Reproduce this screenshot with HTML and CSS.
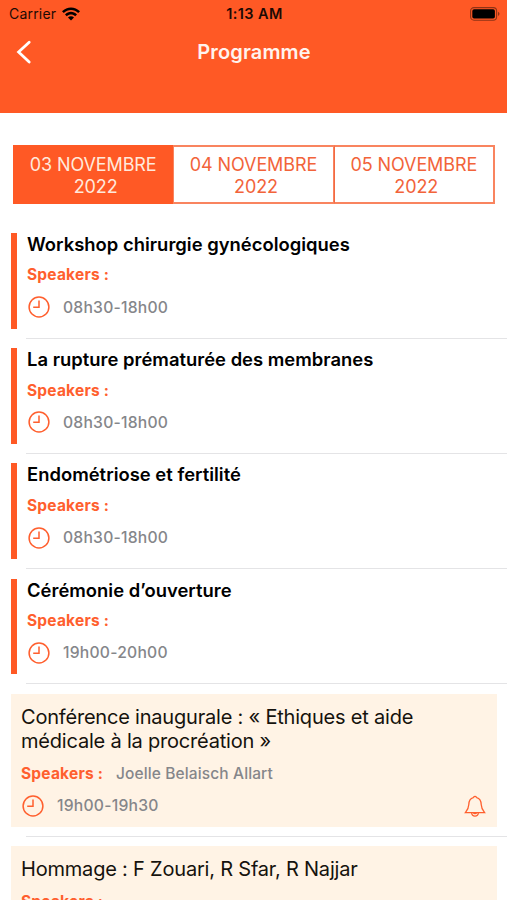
FILE: index.html
```html
<!DOCTYPE html>
<html lang="fr">
<head>
    <meta charset="UTF-8">
    <meta name="viewport" content="width=device-width, initial-scale=1.0">
    <title>Programme</title>
    <link rel="stylesheet" href="styles.css">
</head>
<body>
    <!-- Shared icons -->
    <svg class="icon-defs" width="0" height="0">
        <symbol id="clock" viewBox="0 0 22 22">
            <circle cx="11" cy="11" r="9.9"/>
            <path d="M11 4.5V11.3H5.2"/>
        </symbol>
        <symbol id="bell" viewBox="0 0 22 22">
            <path d="M11 1.3C9.9 1.3 9.7 2.3 9.3 2.6C5.9 3.6 4.9 6.2 4.8 9.4C4.7 13.2 3.7 14.8 1.4 17.6H20.6C18.3 14.8 17.3 13.2 17.2 9.4C17.1 6.2 16.1 3.6 12.7 2.6C12.3 2.3 12.1 1.3 11 1.3Z"/>
            <path d="M7.6 17.8C7.8 20 9.2 21.1 11 21.1S14.2 20 14.4 17.8M9.6 17.8C9.8 19 12.2 19 12.4 17.8"/>
        </symbol>
    </svg>

    <header>
        <div class="status-bar">
            <div class="carrier">
                <span>Carrier</span>
                <svg class="wifi" viewBox="0 0 18 14">
                    <path d="M0 4.3C5 -0.9 13 -0.9 18 4.3L16.2 6.1C12.2 2 5.8 2 1.8 6.1Z"/>
                    <path d="M3 7.4C6.4 4 11.6 4 15 7.4L13.2 9.2C10.8 6.8 7.2 6.8 4.8 9.2Z"/>
                    <path d="M6 10.4C7.7 8.8 10.3 8.8 12 10.4L9 13.5Z"/>
                </svg>
            </div>
            <span class="clock-time">1:13 AM</span>
            <svg class="battery" viewBox="0 0 30 14">
                <rect class="battery-case" x="0.6" y="0.6" width="26" height="12.6" rx="3.4"/>
                <rect x="2.3" y="2.3" width="22.6" height="9.2" rx="1.8"/>
                <path class="battery-tip" d="M28 4.8C30 5.6 30 8.2 28 9Z"/>
            </svg>
        </div>
        <div class="nav-bar">
            <svg class="back" viewBox="0 0 16 24">
                <path d="M13.2 2.2L2.6 12L13.2 22"/>
            </svg>
            <h1>Programme</h1>
        </div>
    </header>

    <nav class="days">
        <a class="day active">03 NOVEMBRE<br>&nbsp;2022</a>
        <a class="day">04 NOVEMBRE<br>&nbsp;2022</a>
        <a class="day">05 NOVEMBRE<br>&nbsp;2022</a>
    </nav>

    <!-- Programme list -->
    <main>
        <section class="row">
            <div class="session">
                <h2>Workshop chirurgie gynécologiques</h2>
                <p class="speakers"><b>Speakers :</b></p>
                <p class="time"><svg class="icon"><use href="#clock"/></svg>08h30-18h00</p>
            </div>
        </section>
        <section class="row">
            <div class="session">
                <h2>La rupture prématurée des membranes</h2>
                <p class="speakers"><b>Speakers :</b></p>
                <p class="time"><svg class="icon"><use href="#clock"/></svg>08h30-18h00</p>
            </div>
        </section>
        <section class="row">
            <div class="session">
                <h2>Endométriose et fertilité</h2>
                <p class="speakers"><b>Speakers :</b></p>
                <p class="time"><svg class="icon"><use href="#clock"/></svg>08h30-18h00</p>
            </div>
        </section>
        <section class="row">
            <div class="session">
                <h2>Cérémonie d’ouverture</h2>
                <p class="speakers"><b>Speakers :</b></p>
                <p class="time"><svg class="icon"><use href="#clock"/></svg>19h00-20h00</p>
            </div>
        </section>
        <section class="row">
            <div class="talk">
                <h3>Conférence inaugurale : « Ethiques et aide<br>médicale à la procréation »</h3>
                <p class="speakers"><b>Speakers :</b>Joelle Belaisch Allart</p>
                <p class="time"><svg class="icon"><use href="#clock"/></svg>19h00-19h30<svg class="icon bell"><use href="#bell"/></svg></p>
            </div>
        </section>
        <section class="row">
            <div class="talk">
                <h3>Hommage : F Zouari, R Sfar, R Najjar</h3>
                <p class="speakers"><b>Speakers :</b></p>
            </div>
        </section>
    </main>
</body>
</html>
```
FILE: styles.css
```css
* { box-sizing: border-box; }
html { overflow: hidden; }
body {
    font-family: Inter, "Liberation Sans", sans-serif;
    background-color: #fff;
    color: #000;
    height: 900px;
    margin: 0;
    overflow: hidden;
}
h1, h2, h3, p { margin: 0; }
.icon-defs { display: block; }

/* Header */
header {
    height: 113px;
    background-color: #ff5925;
}
.status-bar {
    display: grid;
    grid-template-columns: 1fr auto 1fr;
    align-items: center;
    height: 27px;
    padding: 0 7px 0 9px;
    font-size: 14px;
    color: #1c0a04;
}
.carrier {
    display: flex;
    align-items: center;
    gap: 6px;
    letter-spacing: 0.2px;
}
.wifi {
    width: 18px;
    height: 14px;
}
.clock-time {
    font-size: 14.5px;
    font-weight: 600;
    letter-spacing: 0.4px;
}
.battery {
    width: 30px;
    height: 14px;
    justify-self: end;
}
.battery-case {
    fill: none;
    stroke: #8e3316;
    stroke-width: 1.1;
}
.battery-tip { fill: #8e3316; }
.nav-bar {
    display: grid;
    grid-template-columns: 40px 1fr 40px;
    align-items: center;
    height: 50px;
    padding: 0 0 0 1px;
}
.back {
    width: 16px;
    height: 24px;
    margin-left: 15px;
    fill: none;
    stroke: #fff;
    stroke-width: 2.8;
    stroke-linecap: round;
}
h1 {
    font-size: 20px;
    font-weight: 600;
    letter-spacing: 0.15px;
    text-align: center;
    color: #fff3ee;
}

/* Day tabs */
.days {
    display: flex;
    margin: 32px 12px 0 13px;
}
.day {
    flex: 1;
    height: 59px;
    padding-top: 7px;
    border: 2px solid #f9845f;
    border-left-width: 1px;
    border-right-width: 1px;
    font-size: 18px;
    line-height: 21.6px;
    letter-spacing: -0.1px;
    text-align: center;
    color: #f2633a;
}
.day:last-child {
    border-left: 1px solid #f26a43;
    border-right-width: 2px;
}
.day.active {
    border-color: #ff5925;
    background-color: #ff5925;
    color: #ffe9dc;
}

/* Sessions */
main { padding-top: 19.4px; }
.row {
    position: relative;
    padding: 9.6px 10px 10px 11px;
}
.row::after {
    content: "";
    position: absolute;
    left: 26px;
    right: 0;
    bottom: 0;
    height: 1px;
    background-color: #e4e4e6;
}
.row:last-child {
    height: 64px;
    padding-bottom: 0;
    overflow: hidden;
}
.row:last-child::after { display: none; }
.session {
    height: 95.6px;
    padding-left: 10px;
    border-left: 6px solid #ff5925;
}
h2 {
    font-size: 18.4px;
    font-weight: 600;
    line-height: 23px;
    letter-spacing: 0.02px;
}
.speakers {
    display: flex;
    gap: 13px;
    margin-top: 8.4px;
    font-size: 15.5px;
    font-weight: 500;
    line-height: 22px;
    letter-spacing: 0.12px;
    color: #85868a;
}
.speakers b {
    font-weight: 700;
    letter-spacing: 0.2px;
    color: #ff5f2e;
}
.time {
    display: flex;
    align-items: center;
    height: 22px;
    margin-top: 9.8px;
    font-size: 15.7px;
    font-weight: 500;
    letter-spacing: 0.22px;
    color: #85868a;
}
.icon {
    width: 22px;
    height: 22px;
    margin: 0 13.5px 0 0.5px;
    fill: none;
    stroke: #ff5f2e;
    stroke-width: 1.5;
}
.talk {
    height: 132.8px;
    padding: 11px 11px 0 10px;
    background-color: #fff3e5;
}
h3 {
    font-size: 20px;
    font-weight: 400;
    line-height: 24.5px;
    letter-spacing: -0.2px;
    color: #15120d;
}
.talk .speakers { margin-top: 9px; }
.bell {
    margin: 0 0 0 auto;
    stroke-width: 1.3;
}
```
